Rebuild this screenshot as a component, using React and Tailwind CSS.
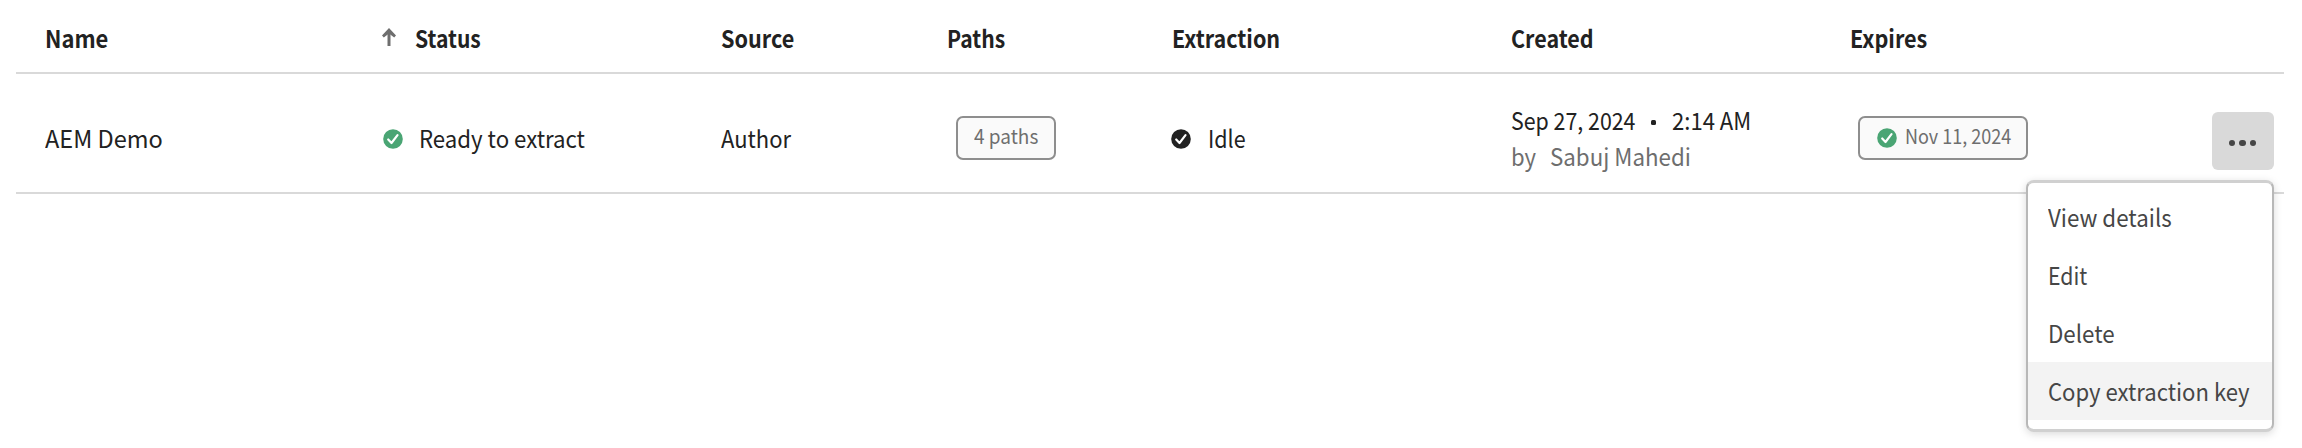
import React from "react";

function CheckCircle({ className }) {
  return (
    <svg viewBox="0 0 20 20" className={className}>
      <circle cx="10" cy="10" r="9.8" fill="currentColor" />
      <path d="M5.2 10.5 8.5 14 14.5 6.2" fill="none" stroke="#fff" strokeWidth="2.2" strokeLinecap="round" strokeLinejoin="round" />
    </svg>
  );
}

// Slightly condensed run of text; className sets the horizontal scale.
function Label({ className, children }) {
  return <span className={"inline-block origin-left " + className}>{children}</span>;
}

const columns =
  "grid grid-cols-[337px_339px_226px_224px_340px_339px_1fr] pl-[29px] w-[2268px] border-b-2 border-[#d9d9d9]";

const menuItems = [
  { label: "View details", row: "", fit: "scale-x-[0.93]" },
  { label: "Edit", row: "", fit: "scale-x-[0.885]" },
  { label: "Delete", row: "", fit: "scale-x-[0.93]" },
  { label: "Copy extraction key", row: "bg-[#f3f3f3]", fit: "scale-x-[0.92]" },
];

export default function App() {
  return (
    <div className="relative h-[448px] w-[2302px] overflow-hidden bg-white pl-4 font-['Noto_Sans_CJK_SC',sans-serif] text-[24px] leading-[36px] whitespace-nowrap text-[#222]">
      <div className={columns + " h-[74px] pt-[20px] font-bold"}>
        <div><Label className="scale-x-[0.915]">Name</Label></div>
        <div className="flex">
          <svg viewBox="0 0 14 18" className="mt-[8px] mr-[19px] h-[18px] w-[14px] text-[#6e6e6e]">
            <path d="M7 18V3" fill="none" stroke="currentColor" strokeWidth="3" />
            <path d="M7 0 14 7.6 12.2 9.6 7 5.6 1.8 9.6 0 7.6Z" fill="currentColor" />
          </svg>
          <Label className="scale-x-[0.88]">Status</Label>
        </div>
        <div><Label className="scale-x-90">Source</Label></div>
        <div><Label className="scale-x-[0.88]">Paths</Label></div>
        <div className="pl-px"><Label className="scale-x-[0.897]">Extraction</Label></div>
        <div><Label className="scale-x-[0.895]">Created</Label></div>
        <div><Label className="scale-x-90">Expires</Label></div>
      </div>

      <div className={columns + " h-[120px]"}>
        <div className="pt-[46px]"><Label className="scale-x-[0.98]">AEM Demo</Label></div>
        <div className="flex pt-[46px] pl-[1px]">
          <CheckCircle className="mt-[8.5px] mr-[16px] size-5 text-[#4aa574]" />
          <Label className="scale-x-[0.925]">Ready to extract</Label>
        </div>
        <div className="pt-[46px]"><Label className="scale-x-[0.915]">Author</Label></div>
        <div className="pt-[42px] pl-[9px]">
          <div className="flex h-[44px] w-[100px] items-center rounded-[7px] border-2 border-[#8e8e8e] bg-[#fafafa] pl-[16px] text-[20px] text-[#6e6e6e]">
            <Label className="scale-x-95 pb-1">4 paths</Label>
          </div>
        </div>
        <div className="flex pt-[46px]">
          <CheckCircle className="mt-[8.5px] mr-[17px] size-5 text-[#222]" />
          <Label className="scale-x-[0.895]">Idle</Label>
        </div>
        <div className="pt-[28px]">
          <div className="flex">
            <div className="w-[140px]"><Label className="scale-x-[0.89]">Sep 27, 2024</Label></div>
            <div className="w-[21px] pt-[18px]"><div className="size-[5px] rounded-[1.5px] bg-[#222]" /></div>
            <Label className="scale-x-[0.92]">2:14 AM</Label>
          </div>
          <div className="flex text-[#6e6e6e]">
            <div className="w-[39px]"><Label className="scale-x-[0.92]">by</Label></div>
            <Label className="scale-x-[0.93]">Sabuj Mahedi</Label>
          </div>
        </div>
        <div className="flex justify-between pr-[10px]">
          <div className="mt-[42px] ml-[8px] flex h-[44px] w-[170px] items-center rounded-[7px] border-2 border-[#8e8e8e] bg-[#fafafa] pl-[17px] text-[20px] text-[#6e6e6e]">
            <CheckCircle className="mr-[8px] size-5 shrink-0 text-[#4aa574]" />
            <Label className="scale-x-[0.9] pb-1">Nov 11, 2024</Label>
          </div>
          <div className="mt-[38px] flex h-[58px] w-[62px] items-center justify-center gap-[4px] rounded-[6px] bg-[#d9d9d9] pt-[4px] pr-[1px]">
            <span className="size-[6.5px] rounded-full bg-[#464646]" />
            <span className="size-[6.5px] rounded-full bg-[#464646]" />
            <span className="size-[6.5px] rounded-full bg-[#464646]" />
          </div>
        </div>
      </div>

      <div className="absolute top-[180px] left-[2026px] flex h-[252px] w-[248px] flex-col rounded-[8px] border-x-2 border-y-3 border-x-[#b8b8b8] border-y-[#d0d0d0] bg-white pt-[5px] text-[#464646] shadow-[0_2px_8px_rgba(0,0,0,0.15)]">
        {menuItems.map((item) => (
          <div key={item.label} className={"flex h-[58px] items-center pl-[20px] " + item.row}>
            <Label className={item.fit}>{item.label}</Label>
          </div>
        ))}
      </div>
    </div>
  );
}
